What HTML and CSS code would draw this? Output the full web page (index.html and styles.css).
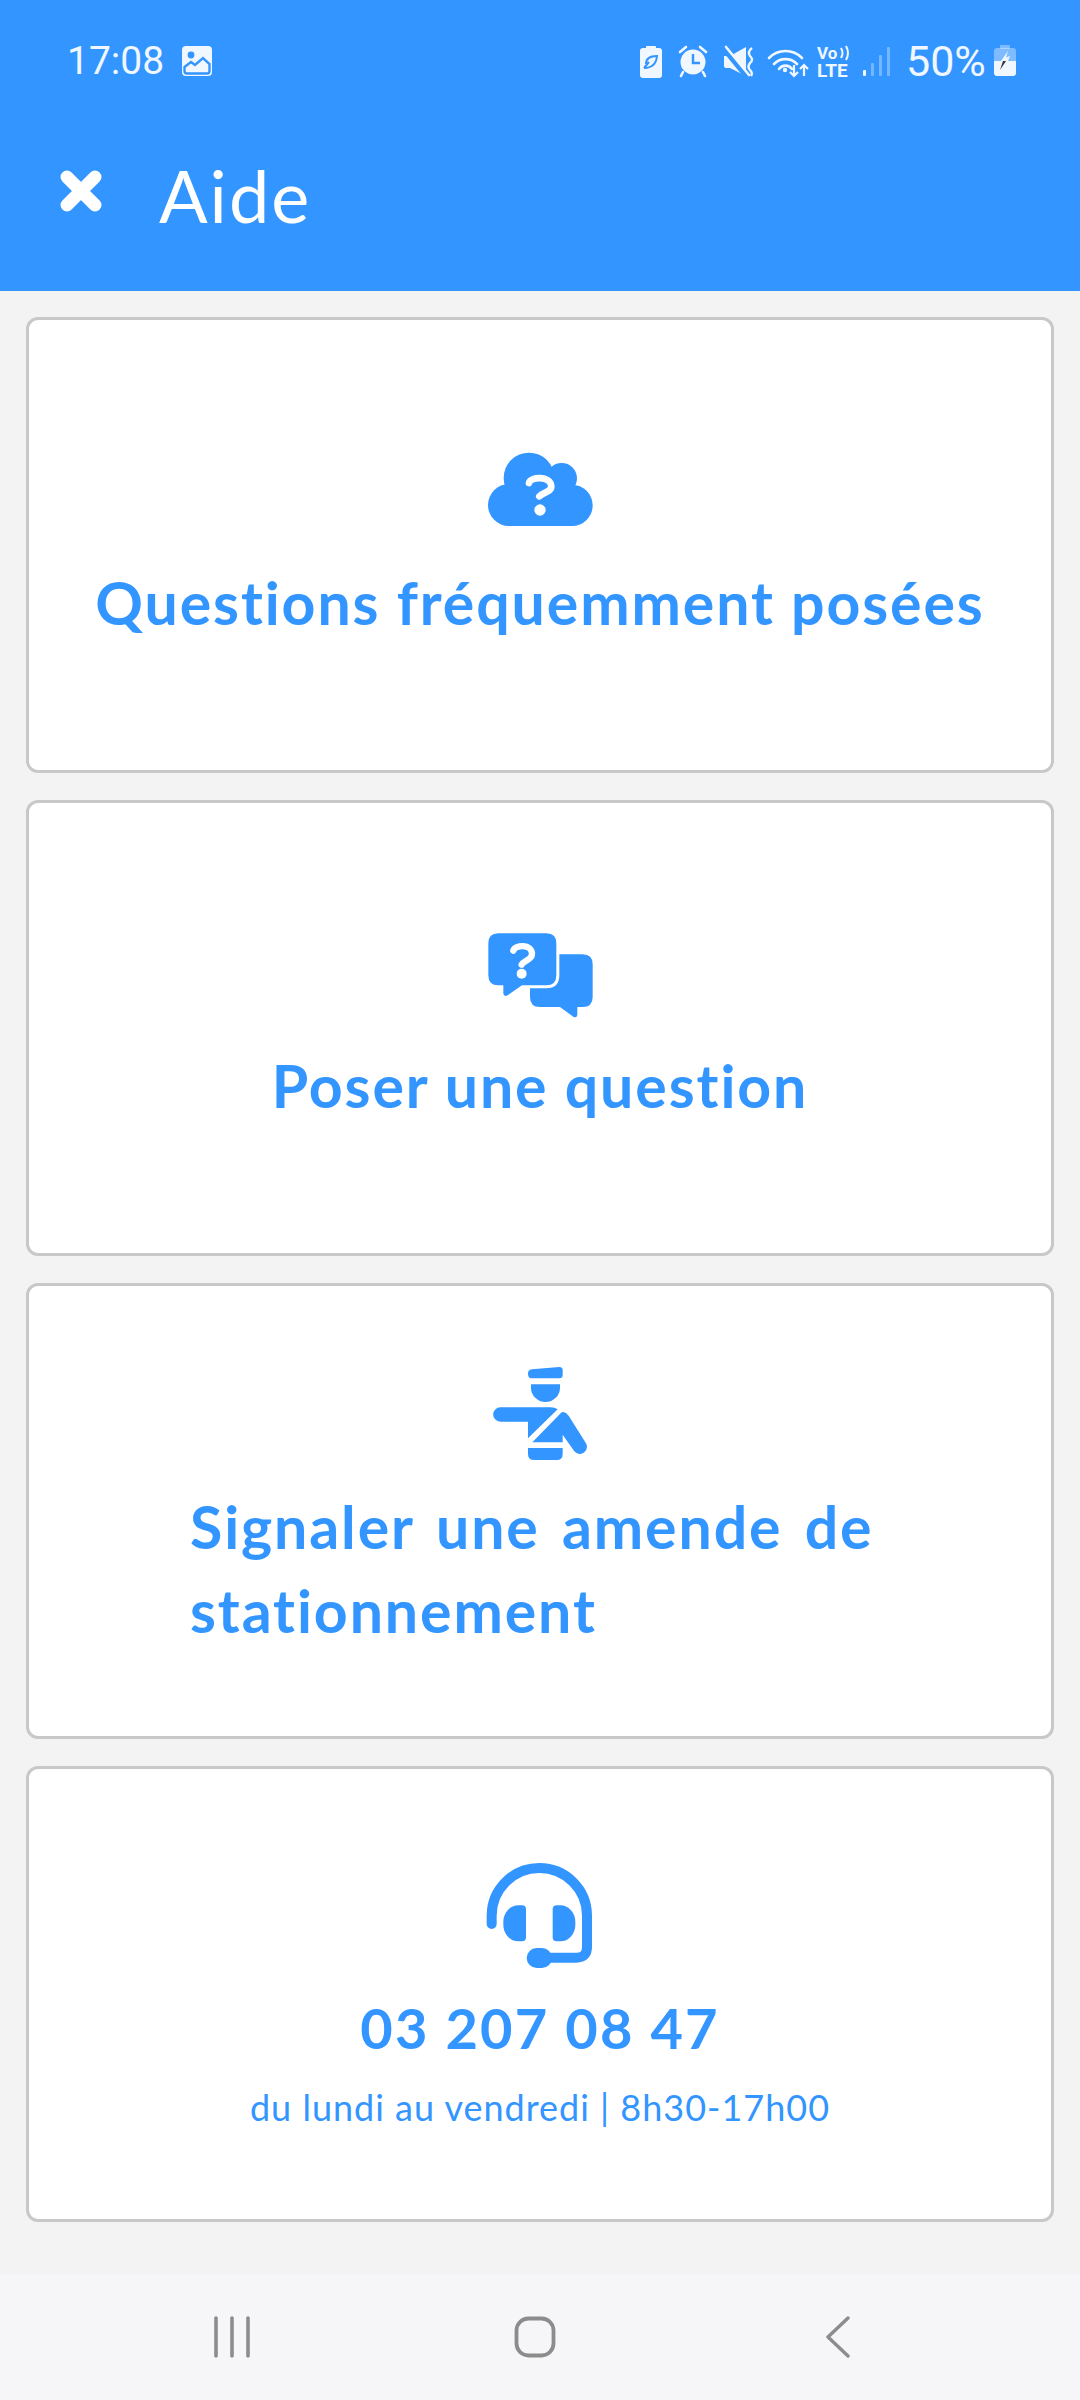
FILE: index.html
```html
<!DOCTYPE html>
<html lang="fr">
<head>
  <meta charset="UTF-8">
  <meta name="viewport" content="width=device-width, initial-scale=1.0">
  <title>Aide</title>
  <link rel="stylesheet" href="styles.css">
</head>
<body>
<div class="page">
  <div class="top">
    <div class="status">
      <span class="time">17:08</span>
      <svg class="photo" width="32" height="32" viewBox="0 0 32 32">
        <rect x="1" y="1" width="30" height="30" rx="4" fill="#f0f7ff"/>
        <circle cx="10" cy="10" r="3.4" fill="#3395ff"/>
        <path d="M3.500 22 L10 17 L14 20 L22 13 L28.500 19 V26 Q28.500 28.500 26 28.500 H6 Q3.500 28.500 3.500 26 Z" fill="#f0f7ff" stroke="#3395ff" stroke-width="2.400"/>
      </svg>
      <svg class="sys" width="270" height="50" viewBox="630 36 270 50">
        <!-- battery saver -->
        <rect x="639" y="48" width="22" height="30" rx="3" fill="#f0f7ff"/>
        <rect x="645" y="46" width="10" height="4" rx="1" fill="#f0f7ff"/>
        <path d="M643 68 C648 68 655 67 656 56 C650 56 645 58 645 64 M648 62 L643 68" fill="none" stroke="#3395ff" stroke-width="2"/>
        <!-- alarm -->
        <circle cx="692" cy="62" r="12.500" fill="#f0f7ff"/>
        <path d="M692 54 V63 H699" fill="none" stroke="#3395ff" stroke-width="2.400"/>
        <path d="M679 52 L685 47 M705 52 L699 47 M682 72 L680 76 M702 72 L704 76" stroke="#f0f7ff" stroke-width="2.600" stroke-linecap="round"/>
        <!-- mute -->
        <path d="M723 56 H729 L745 47 V76 L729 68 H725 Q723 68 723 66 Z" fill="#f0f7ff"/>
        <path d="M722 48 L745 76" stroke="#3395ff" stroke-width="5"/>
        <path d="M725 47 L748 75" stroke="#f0f7ff" stroke-width="2.600" stroke-linecap="round"/>
        <path d="M751 48 Q746 52 749 56 Q753 60 749 63 Q746 67 749 70 Q752 73 750 76" fill="none" stroke="#f0f7ff" stroke-width="2.400"/>
        <!-- wifi -->
        <path d="M768 58 A23 23 0 0 1 801 58 M773 64 A16 16 0 0 1 796 64 M778 69 A8 8 0 0 1 791 69" fill="none" stroke="#f0f7ff" stroke-width="2.600" stroke-linecap="round"/>
        <circle cx="784" cy="70" r="2.200" fill="#f0f7ff"/>
        <path d="M793 65 V76 M789 72 L793 76 L797 72 M803 76 V65 M799 69 L803 65 L807 69" fill="none" stroke="#f0f7ff" stroke-width="2.200"/>
        <!-- volte -->
        <text class="vo" x="816" y="59">Vo</text>
        <path d="M840 48 Q843 53 840 58 M845 46 Q849 53 845 60" fill="none" stroke="#f0f7ff" stroke-width="2"/>
        <text class="lte" x="816" y="77">LTE</text>
        <!-- signal -->
        <rect x="862" y="70" width="3" height="6" rx="1" fill="#f0f7ff"/>
        <rect x="870" y="63" width="3" height="13" rx="1" fill="#f0f7ff" opacity=".35"/>
        <rect x="878" y="55" width="3" height="21" rx="1" fill="#f0f7ff" opacity=".35"/>
        <rect x="886" y="47" width="3" height="29" rx="1" fill="#f0f7ff" opacity=".35"/>
      </svg>
      <span class="pct">50%</span>
      <svg class="batt" width="22" height="32" viewBox="0 0 22 32">
        <rect x="6" y="0" width="10" height="4" rx="1" fill="#f0f7ff" opacity=".4"/>
        <path d="M0 6 Q0 3 3 3 H19 Q22 3 22 6 V16 H0 Z" fill="#f0f7ff" opacity=".4"/>
        <path d="M0 16 H22 V28 Q22 31 19 31 H3 Q0 31 0 28 Z" fill="#f0f7ff"/>
        <path d="M14 6 L7 16 H11 Z M16 11 L11 13 V16 H14 Z" fill="#f0f7ff"/>
        <path d="M12 16 H9 L6 25 Z" fill="#333"/>
      </svg>
    </div>
    <div class="bar">
      <svg class="close" width="42" height="42" viewBox="0 0 42 42">
        <path d="M7 7 L35 35 M35 7 L7 35" stroke="#fff" stroke-width="13" stroke-linecap="round" stroke-linejoin="round"/>
      </svg>
      <span class="bar-title">Aide</span>
    </div>
  </div>

  <div class="list">
    <div class="card">
      <svg class="icon" width="160" height="120" viewBox="0 0 480 360">
        <g fill="#3395ff">
          <circle cx="147" cy="228" r="63"/>
          <circle cx="336" cy="229" r="62"/>
          <rect x="147" y="165" width="189" height="126"/>
          <circle cx="207" cy="147" r="76"/>
          <circle cx="305" cy="148" r="46"/>
        </g>
        <path d="M207 162 C212 142 272 140 274 172 C274 190 248 190 238 202" fill="none" stroke="#fff" stroke-width="20" stroke-linecap="round"/>
        <circle cx="240" cy="243" r="17" fill="#fff"/>
      </svg>
      <div class="title">Questions fréquemment posées</div>
    </div>

    <div class="card">
      <svg class="icon" width="160" height="120" viewBox="0 0 480 360">
        <path d="M240 127 H368 Q398 127 398 157 V255 Q398 285 368 285 H352 V308 Q350 320 340 314 L300 285 H240 Q210 285 210 255 V157 Q210 127 240 127 Z" fill="#3395ff"/>
        <path d="M115 64 H259 Q289 64 289 94 V190 Q289 220 259 220 H186 L143 250 Q131 256 130 244 V220 H115 Q85 220 85 190 V94 Q85 64 115 64 Z" fill="#3395ff" stroke="#fff" stroke-width="18" paint-order="stroke"/>
        <path d="M160 116 C165 98 216 94 216 126 C216 144 192 144 185 158" fill="none" stroke="#fff" stroke-width="19" stroke-linecap="round"/>
        <circle cx="185" cy="185" r="15" fill="#fff"/>
      </svg>
      <div class="title">Poser une question</div>
    </div>

    <div class="card card-wrap">
      <svg class="icon" width="160" height="120" viewBox="0 0 480 360">
        <g fill="#3395ff">
          <path d="M216 58 L298 51 Q308 51 308 60 V76 Q308 85 298 85 H216 Q204 85 204 71 Q204 59 216 58 Z"/>
          <path d="M213 103 H300 V113 A43.500 43 0 0 1 213 113 Z"/>
          <path d="M121 172 H272 Q284 172 293 178 L204 265 V215 H121 A21.500 21.500 0 0 1 121 172 Z"/>
          <path d="M217 277 L305 187 Q316 183 326 197 L376 277 A20 20 0 0 1 343 304 L308 254 V277 Z"/>
          <path d="M204 294 H308 V312 Q308 330 290 330 H222 Q204 330 204 312 Z"/>
        </g>
      </svg>
      <div class="title title-wrap">Signaler une amende de stationnement</div>
    </div>

    <div class="card card-phone">
      <svg class="icon" width="160" height="140" viewBox="0 0 480 420">
        <path d="M95 246 V221 A143 143 0 0 1 381 221 V315 Q381 347 349 347 H260" fill="none" stroke="#3395ff" stroke-width="30" stroke-linecap="round"/>
        <g fill="#3395ff">
          <path d="M186 190 Q198 190 198 202 V286 Q198 298 186 298 H175 A45 50 0 0 1 130 248 V240 A45 50 0 0 1 175 190 Z"/>
          <path d="M290 190 Q278 190 278 202 V286 Q278 298 290 298 H301 A45 50 0 0 0 346 248 V240 A45 50 0 0 0 301 190 Z"/>
          <rect x="200" y="318" width="76" height="60" rx="30"/>
        </g>
      </svg>
      <div class="phone">03 207 08 47</div>
      <div class="hours">du lundi au vendredi | 8h30-17h00</div>
    </div>
  </div>

  <div class="nav">
    <svg width="36" height="42" viewBox="0 0 36 42">
      <path d="M2 2 V40 M18 2 V40 M34 2 V40" stroke="#8c8c8c" stroke-width="3.600" stroke-linecap="round"/>
    </svg>
    <svg class="nav-home" width="42" height="42" viewBox="0 0 42 42">
      <rect x="2.500" y="2.500" width="37" height="37" rx="12" fill="none" stroke="#8c8c8c" stroke-width="3.800"/>
    </svg>
    <svg width="24" height="42" viewBox="0 0 24 42">
      <path d="M22 2 L2 21 L22 40" fill="none" stroke="#8c8c8c" stroke-width="3.400" stroke-linecap="round" stroke-linejoin="round"/>
    </svg>
  </div>
</div>
</body>
</html>
```

FILE: styles.css
```css
* {
  box-sizing: border-box;
}
body {
  margin: 0;
  background-color: #f3f3f3;
  font-family: Lato, "Noto Sans", sans-serif;
}
.page {
  width: 1080px;
  height: 2400px;
  display: flex;
  flex-direction: column;
}
.top {
  height: 291px;
  background-color: #3395ff;
  color: #fff;
}
.status {
  height: 122px;
  display: flex;
  align-items: center;
  padding-left: 67px;
  color: #f0f7ff;
  font-family: Roboto, sans-serif;
}
.time {
  font-size: 39px;
  width: 114px;
}
.photo {
  flex-shrink: 0;
}
.sys {
  margin-left: 418px;
  flex-shrink: 0;
}
.vo {
  font: 700 17px Roboto, sans-serif;
  fill: #f0f7ff;
}
.lte {
  font: 700 19px Roboto, sans-serif;
  fill: #f0f7ff;
}
.pct {
  font-size: 43px;
  margin-left: 5px;
  width: 88px;
}
.bar {
  display: flex;
  align-items: center;
  padding-left: 60px;
  height: 138px;
}
.bar-title {
  font-size: 72px;
  letter-spacing: 2px;
  margin-left: 57px;
  padding-top: 8px;
}
.list {
  flex: 1;
  padding: 26px 26px 0;
  display: flex;
  flex-direction: column;
  gap: 27px;
}
.card {
  height: 456px;
  background: #fff;
  border: 3px solid #c8c8c8;
  border-radius: 12px;
  display: flex;
  flex-direction: column;
  align-items: center;
  justify-content: center;
  padding-bottom: 16px;
  color: #3395ff;
}
.card-wrap {
  padding-bottom: 19px;
}
.card-phone {
  padding-bottom: 10px;
}
.title {
  font-size: 59px;
  font-weight: 700;
  letter-spacing: 1.9px;
  line-height: 84px;
  margin-top: 12px;
}
.title-wrap {
  width: 700px;
  margin-top: 15px;
  word-spacing: 6px;
}
.phone {
  font-size: 56px;
  font-weight: 700;
  letter-spacing: 2.2px;
  line-height: 84px;
  margin-top: 4px;
}
.hours {
  font-size: 36px;
  letter-spacing: 1px;
  line-height: 60px;
  margin-top: 7px;
}
.nav {
  height: 126px;
  background-color: #f6f6f8;
  display: flex;
  align-items: center;
  justify-content: space-between;
  padding: 0 230px 0 214px;
}
.nav-home {
  margin-right: 6px;
}
```
